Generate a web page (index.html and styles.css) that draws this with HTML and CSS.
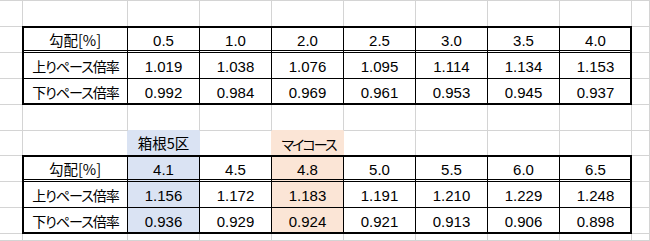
FILE: index.html
```html
<!DOCTYPE html>
<html lang="ja">
<head>
<meta charset="utf-8">
<link rel="stylesheet" href="styles.css">
</head>
<body>
<div class="stack">
<div class="sheet cells">
  <!-- row 1 -->
  <div class="c"></div><div class="c"></div><div class="c"></div><div class="c"></div><div class="c"></div><div class="c"></div><div class="c"></div><div class="c"></div><div class="c"></div><div class="c"></div>
  <!-- row 2 -->
  <div class="c"></div>
  <div class="c t h jp">勾配[%]</div>
  <div class="c t h">0.5</div><div class="c t h">1.0</div><div class="c t h">2.0</div><div class="c t h">2.5</div><div class="c t h">3.0</div><div class="c t h">3.5</div><div class="c t h">4.0</div>
  <div class="c"></div>
  <!-- row 3 -->
  <div class="c"></div>
  <div class="c t jp narrow">上りペース倍率</div>
  <div class="c t">1.019</div><div class="c t">1.038</div><div class="c t">1.076</div><div class="c t">1.095</div><div class="c t">1.114</div><div class="c t">1.134</div><div class="c t">1.153</div>
  <div class="c"></div>
  <!-- row 4 -->
  <div class="c"></div>
  <div class="c t jp narrow">下りペース倍率</div>
  <div class="c t">0.992</div><div class="c t">0.984</div><div class="c t">0.969</div><div class="c t">0.961</div><div class="c t">0.953</div><div class="c t">0.945</div><div class="c t">0.937</div>
  <div class="c"></div>
  <!-- row 5 -->
  <div class="c"></div><div class="c"></div><div class="c above-blue"></div><div class="c"></div><div class="c above-orange"></div><div class="c"></div><div class="c"></div><div class="c"></div><div class="c"></div><div class="c"></div>
  <!-- row 6 -->
  <div class="c"></div>
  <div class="c left-of-blue"></div>
  <div class="c blue fill-edge jp">箱根5区</div>
  <div class="c left-of-orange"></div>
  <div class="c orange fill-edge jp kana">マイコース</div>
  <div class="c"></div><div class="c"></div><div class="c"></div><div class="c"></div><div class="c"></div>
  <!-- row 7 -->
  <div class="c"></div>
  <div class="c t h jp">勾配[%]</div>
  <div class="c t h blue">4.1</div><div class="c t h">4.5</div><div class="c t h orange">4.8</div><div class="c t h">5.0</div><div class="c t h">5.5</div><div class="c t h">6.0</div><div class="c t h">6.5</div>
  <div class="c"></div>
  <!-- row 8 -->
  <div class="c"></div>
  <div class="c t jp narrow">上りペース倍率</div>
  <div class="c t blue">1.156</div><div class="c t">1.172</div><div class="c t orange">1.183</div><div class="c t">1.191</div><div class="c t">1.210</div><div class="c t">1.229</div><div class="c t">1.248</div>
  <div class="c"></div>
  <!-- row 9 -->
  <div class="c"></div>
  <div class="c t jp narrow">下りペース倍率</div>
  <div class="c t blue">0.936</div><div class="c t">0.929</div><div class="c t orange">0.924</div><div class="c t">0.921</div><div class="c t">0.913</div><div class="c t">0.906</div><div class="c t">0.898</div>
  <div class="c"></div>
  <!-- row 10 -->
  <div class="c"></div><div class="c"></div><div class="c"></div><div class="c"></div><div class="c"></div><div class="c"></div><div class="c"></div><div class="c"></div><div class="c"></div><div class="c"></div>
</div>
<div class="sheet frames">
  <div class="frame frame-1"></div>
  <div class="frame frame-2"></div>
</div>
</div>
</body>
</html>
```

FILE: styles.css
```css
html, body {
  margin: 0;
  padding: 0;
  background: #ffffff;
}

.stack {
  display: grid;
  width: 650px;
  height: 241px;
  overflow: hidden;
}

.stack > .sheet {
  grid-area: 1 / 1;
}

.sheet {
  display: grid;
  grid-template-columns: 23px 105px repeat(7, 72px) 1fr;
  grid-template-rows: 26px 26px 26px 26px 26px 25px 26px 26px 26px 1fr;
  width: 650px;
  height: 241px;
  border-top: 1px solid #d4d4d4;
  box-sizing: border-box;
  font-family: "Liberation Sans", "Noto Sans CJK JP", sans-serif;
  font-size: 15px;
  color: #000;
}

.frames {
  border-top-color: transparent;
  pointer-events: none;
}

.c {
  box-sizing: border-box;
  border-right: 1px solid #d4d4d4;
  border-bottom: 1px solid #d4d4d4;
  display: flex;
  align-items: center;
  justify-content: center;
  padding-top: 1px;
  white-space: nowrap;
  line-height: 1;
}

.t {
  border-right-color: #000;
  border-bottom-color: #000;
}

.h {
  border-bottom: 3px double #000;
  padding-top: 3px;
}

.jp {
  font-family: "Noto Sans CJK JP", sans-serif;
  font-feature-settings: "palt";
  font-size: 14.5px;
}

.narrow {
  font-size: 14px;
  letter-spacing: -1px;
  padding-left: 1px;
}

.kana {
  font-size: 14px;
  letter-spacing: -2px;
  padding-left: 2px;
}

.blue { background: #dae3f3; }
.orange { background: #fbe5d6; }

.fill-edge.blue { border-right-color: #dae3f3; border-bottom-color: #dae3f3; }
.fill-edge.orange { border-right-color: #fbe5d6; border-bottom-color: #fbe5d6; }
.left-of-blue { border-right-color: #dae3f3; }
.left-of-orange { border-right-color: #fbe5d6; }
.above-blue { border-bottom-color: #dae3f3; }
.above-orange { border-bottom-color: #fbe5d6; }

.frame {
  border: 2px solid #000;
  margin: -1px 0 0 -1px;
}

.frame-1 { grid-area: 2 / 2 / 5 / 10; }
.frame-2 { grid-area: 7 / 2 / 10 / 10; }
```
